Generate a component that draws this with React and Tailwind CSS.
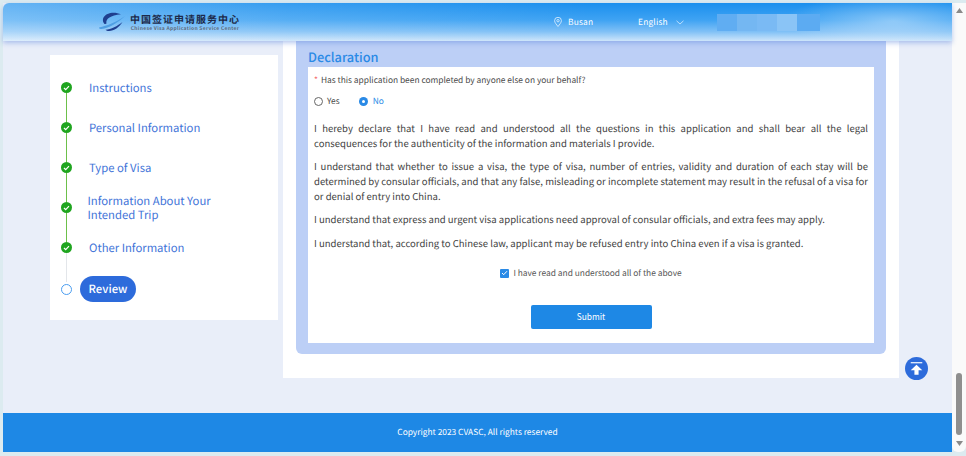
const steps = [
  { label: 'Instructions', pad: 'ml-[17px] mt-[0.5px]' },
  { label: 'Personal Information', pad: 'ml-[17px] mt-[0.5px]' },
  { label: 'Type of Visa', pad: 'ml-[17px] mt-[1px]' },
  { label: 'Information About Your Intended Trip', pad: 'ml-[15.5px] w-[140px] leading-[14px] mt-[0.5px]' },
  { label: 'Other Information', pad: 'ml-[17px] mt-[1px]' },
];

const paragraphs = [
  'I hereby declare that I have read and understood all the questions in this application and shall bear all the legal consequences for the authenticity of the information and materials I provide.',
  'I understand that whether to issue a visa, the type of visa, number of entries, validity and duration of each stay will be determined by consular officials, and that any false, misleading or incomplete statement may result in the refusal of a visa for or denial of entry into China.',
  'I understand that express and urgent visa applications need approval of consular officials, and extra fees may apply.',
  'I understand that, according to Chinese law, applicant may be refused entry into China even if a visa is granted.',
];

const Logo = () => (
  <svg width="26" height="20" viewBox="0 0 26 20" className="shrink-0">
    <path d="M22 2.2C16 -.4 7.500 0 4.500 5.500 3.300 8 4 10.500 5.500 12c.4-.1 1.200-.3 2-.6C6.500 8 9.500 3.500 22 2.200z" fill="#1f3f8f" />
    <path d="M22.500 8C19.500 13 14 17 9 17c-1.500 0-2.700-.4-3.500-1.200C11 15.500 17.500 12 22.500 8z" fill="#1f3f8f" transform="translate(1 2)" />
    <path d="M0 15.500C8 14 18 9.500 26 4c-6 6-16 12.500-23.500 13C1 17 0 16.500 0 15.500z" fill="#4f9fe3" />
  </svg>
);

const Header = () => (
  <header className="relative z-10 h-[38px] shrink-0 flex items-center rounded-tl-md shadow-[0_2px_5px_rgba(90,130,220,0.45)] bg-[radial-gradient(ellipse_110px_26px_at_890px_18px,rgba(255,255,255,0.4),transparent),linear-gradient(90deg,rgba(255,255,255,0.32)_0%,rgba(255,255,255,0.12)_30%,rgba(255,255,255,0)_62%),linear-gradient(180deg,#1a8fee_0%,#3fa3f3_45%,#7fc0f6_75%,#cde5fa_100%)]">
    <div className="ml-[96px] flex items-center gap-[5px]">
      <Logo />
      <div className="flex flex-col items-center">
        <span className="text-[10px] leading-[13px] tracking-[1px] font-bold text-[#1d2a4a] whitespace-nowrap">中国签证申请服务中心</span>
        <span className="text-[5px] leading-[7px] tracking-[0.3px] font-bold text-[#5d6b7d] whitespace-nowrap">Chinese Visa Application Service Center</span>
      </div>
    </div>
    <div className="ml-[314px] flex items-center text-white text-[8.4px] tracking-[0.2px]">
      <svg width="8" height="10" viewBox="0 0 8 10" fill="none" stroke="#e6f3ff" strokeWidth="0.8">
        <path d="M4 9.500C2.500 7.500.6 5.600.6 3.700a3.400 3.400 0 0 1 6.800 0C7.400 5.600 5.500 7.500 4 9.500z" />
        <circle cx="4" cy="3.700" r="1.200" />
      </svg>
      <span className="ml-[6px] w-[26px]">Busan</span>
      <span className="ml-[44px] w-[31px]">English</span>
      <svg width="8" height="5" viewBox="0 0 8 5" fill="none" stroke="#d6ebff" strokeWidth="0.8" className="ml-[7px]">
        <path d="M.5.8 4 4 7.500.8" />
      </svg>
      <div className="ml-[33px] flex h-[17px]">
        <div className="w-[20px] bg-[#60adf2]" />
        <div className="w-[20px] bg-[#74b7f2]" />
        <div className="w-[20px] bg-[#7abaf4]" />
        <div className="w-[20px] bg-[#8ac4f6]" />
        <div className="w-[23px] bg-[#5cabf2]" />
      </div>
    </div>
  </header>
);

const Check = () => (
  <span className="w-[11px] h-[11px] shrink-0 rounded-full bg-[#1fa51f] flex items-center justify-center">
    <svg width="7" height="6" viewBox="0 0 7 6" fill="none" stroke="white" strokeWidth="1.2">
      <path d="M1 3l1.700 1.700L6 1.200" />
    </svg>
  </span>
);

const Sidebar = () => (
  <aside className="ml-[47px] mt-[14px] w-[228px] h-[265px] shrink-0 bg-white pt-[27px] pl-[11px]">
    {steps.map((s, i) => (
      <div key={s.label} className="flex h-[40px]">
        <div className="w-[11px] flex flex-col items-center">
          <Check />
          <span className={i === 4 ? 'w-px flex-1 bg-[#e3e6ea]' : 'w-[1.5px] flex-1 bg-[#6cc04a]'} />
        </div>
        <div className={`${s.pad} h-[11px] flex items-center text-[11.3px] text-[#3f74d8]`}>{s.label}</div>
      </div>
    ))}
    <div className="flex items-center -mt-[6px]">
      <span className="w-[11px] h-[11px] rounded-full border border-[#4a9df0] bg-white" />
      <span className="ml-[8px] w-[56px] h-[26px] rounded-full bg-[#2d6bdb] text-white text-[11.3px] font-medium flex items-center justify-center">Review</span>
    </div>
  </aside>
);

const Declaration = () => (
  <main className="ml-[5px] w-[616px] h-[337px] shrink-0 bg-white px-[13px]">
    <div className="h-[313px] bg-[#bccff6] rounded-b-md px-[12px] flex flex-col">
      <h2 className="h-[26px] pt-[6px] text-[12.8px] leading-[19px] font-medium text-[#2a8ae6]">Declaration</h2>
      <div className="w-[566px] h-[276px] bg-white px-[6px] text-[#4a4a4a] flex flex-col">
        <p className="mt-[6px] h-[14px] text-[8.4px] leading-[14px]">
          <span className="text-[#f56c6c] mr-[3px]">*</span>Has this application been completed by anyone else on your behalf?
        </p>
        <div className="mt-[7px] h-[14px] flex items-center text-[8.4px]">
          <span className="w-[9px] h-[9px] rounded-full border border-[#666] bg-white" />
          <span className="ml-[4px]">Yes</span>
          <span className="ml-[19px] w-[9px] h-[9px] rounded-full bg-[#2a8ae6] flex items-center justify-center">
            <span className="w-[3px] h-[3px] rounded-full bg-white" />
          </span>
          <span className="ml-[5px] text-[#2a8ae6]">No</span>
        </div>
        <div className="mt-[13.3px] text-[9.55px] leading-[14.7px] text-[#3f3f3f] text-justify flex flex-col gap-[8.7px]">
          {paragraphs.map((p) => (
            <p key={p}>{p}</p>
          ))}
        </div>
        <div className="mt-[16px] h-[14px] flex items-center justify-center text-[8.4px] text-[#555]">
          <span className="w-[9px] h-[9px] rounded-[1px] bg-[#2a8ae6] flex items-center justify-center">
            <svg width="7" height="6" viewBox="0 0 7 6" fill="none" stroke="white" strokeWidth="1">
              <path d="M1 3l1.700 1.700L6 1.200" />
            </svg>
          </span>
          <span className="ml-[4px]">I have read and understood all of the above</span>
        </div>
        <button className="mt-[24.5px] self-center w-[121px] h-[24px] pb-[1px] rounded-[2px] bg-[#1e88e5] text-white text-[8.4px]">Submit</button>
      </div>
    </div>
  </main>
);

const Scrollbar = () => (
  <div className="w-[14px] shrink-0 mb-[4px] bg-[#fafafa] flex flex-col items-center pt-[5px] pb-[6px] rounded-b-md">
    <svg width="7" height="5" viewBox="0 0 7 5"><path d="M3.500 0 7 5H0z" fill="#8a8a8a" /></svg>
    <div className="mt-auto w-[6px] h-[62px] rounded-full bg-[#8f8f8f]" />
    <svg width="7" height="5" viewBox="0 0 7 5" className="mt-[6px]"><path d="M0 0h7L3.500 5z" fill="#8a8a8a" /></svg>
  </div>
);

export default function App() {
  return (
    <div className="w-[966px] h-[456px] overflow-hidden flex bg-[#dcebf0] pl-[3px] pt-[3px] [text-rendering:geometricPrecision] [font-family:'Noto_Sans_CJK_SC','Noto_Sans',sans-serif]">
      <div className="relative flex-1 flex flex-col bg-[#e9eef9] mb-[4px]">
        <Header />
        <div className="flex-1 flex items-start">
          <Sidebar />
          <Declaration />
        </div>
        <button className="absolute left-[902px] top-[354px] w-[23px] h-[23px] rounded-full bg-[#2d6bdb] flex items-center justify-center">
          <svg width="15" height="15" viewBox="0 0 13 13" fill="white">
            <rect x="1.500" y="1" width="10" height="1" />
            <path d="M6.500 3.200 11.500 8H8.300v4H4.700V8H1.500z" />
          </svg>
        </button>
        <footer className="h-[39px] shrink-0 pb-[1px] bg-[#1e88e5] text-white text-[8.4px] flex items-center justify-center">
          Copyright 2023 CVASC, All rights reserved
        </footer>
      </div>
      <Scrollbar />
    </div>
  );
}
